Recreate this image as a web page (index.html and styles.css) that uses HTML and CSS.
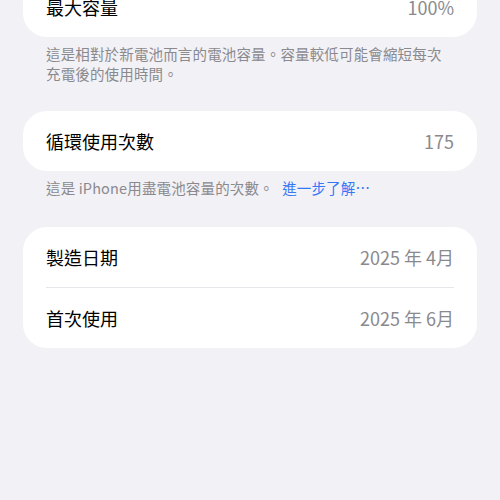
FILE: index.html
```html
<!DOCTYPE html>
<html lang="zh-Hant">
<head>
    <meta charset="UTF-8">
    <meta name="viewport" content="width=device-width, initial-scale=1.0">
    <title>電池健康度</title>
    <link rel="stylesheet" href="styles.css">
</head>
<body>
    <div class="page">
        <div class="group">
            <div class="row">
                <span class="label">最大容量</span>
                <span class="value">100%</span>
            </div>
        </div>
        <p class="footer first">這是相對於新電池而言的電池容量。容量較低可能會縮短每次充電後的使用時間。</p>

        <div class="group">
            <div class="row">
                <span class="label">循環使用次數</span>
                <span class="value">175</span>
            </div>
        </div>
        <p class="footer">這是 iPhone用盡電池容量的次數。 <a href="#" class="link">進一步了解⋯</a></p>

        <div class="group">
            <div class="row">
                <span class="label">製造日期</span>
                <span class="value">2025 年 4月</span>
            </div>
            <div class="row">
                <span class="label">首次使用</span>
                <span class="value">2025 年 6月</span>
            </div>
        </div>
    </div>
</body>
</html>
```

FILE: styles.css
```css
body {
    margin: 0;
    background-color: #f2f1f6;
    font-family: "Noto Sans CJK TC", "Noto Sans", sans-serif;
    color: #000;
    overflow: hidden;
}
.page {
    margin-top: -23px;
    padding: 0 23px;
}
.group {
    background-color: #fff;
    border-radius: 24px;
    overflow: hidden;
}
.row {
    display: flex;
    justify-content: space-between;
    align-items: center;
    height: 60px;
    margin: 0 23px;
    font-size: 18px;
}
.row + .row {
    border-top: 1px solid #e6e6eb;
}
.label {
    color: #000;
}
.value {
    color: #8a8a8e;
}
.footer {
    margin: 7px 30px 29px 23px;
    font-size: 14.5px;
    letter-spacing: 0.15px;
    line-height: 20px;
    color: #8a8a8e;
}
.footer.first {
    margin-bottom: 27px;
}
.link {
    margin-left: 5px;
    color: #3478f6;
    text-decoration: none;
}
```
